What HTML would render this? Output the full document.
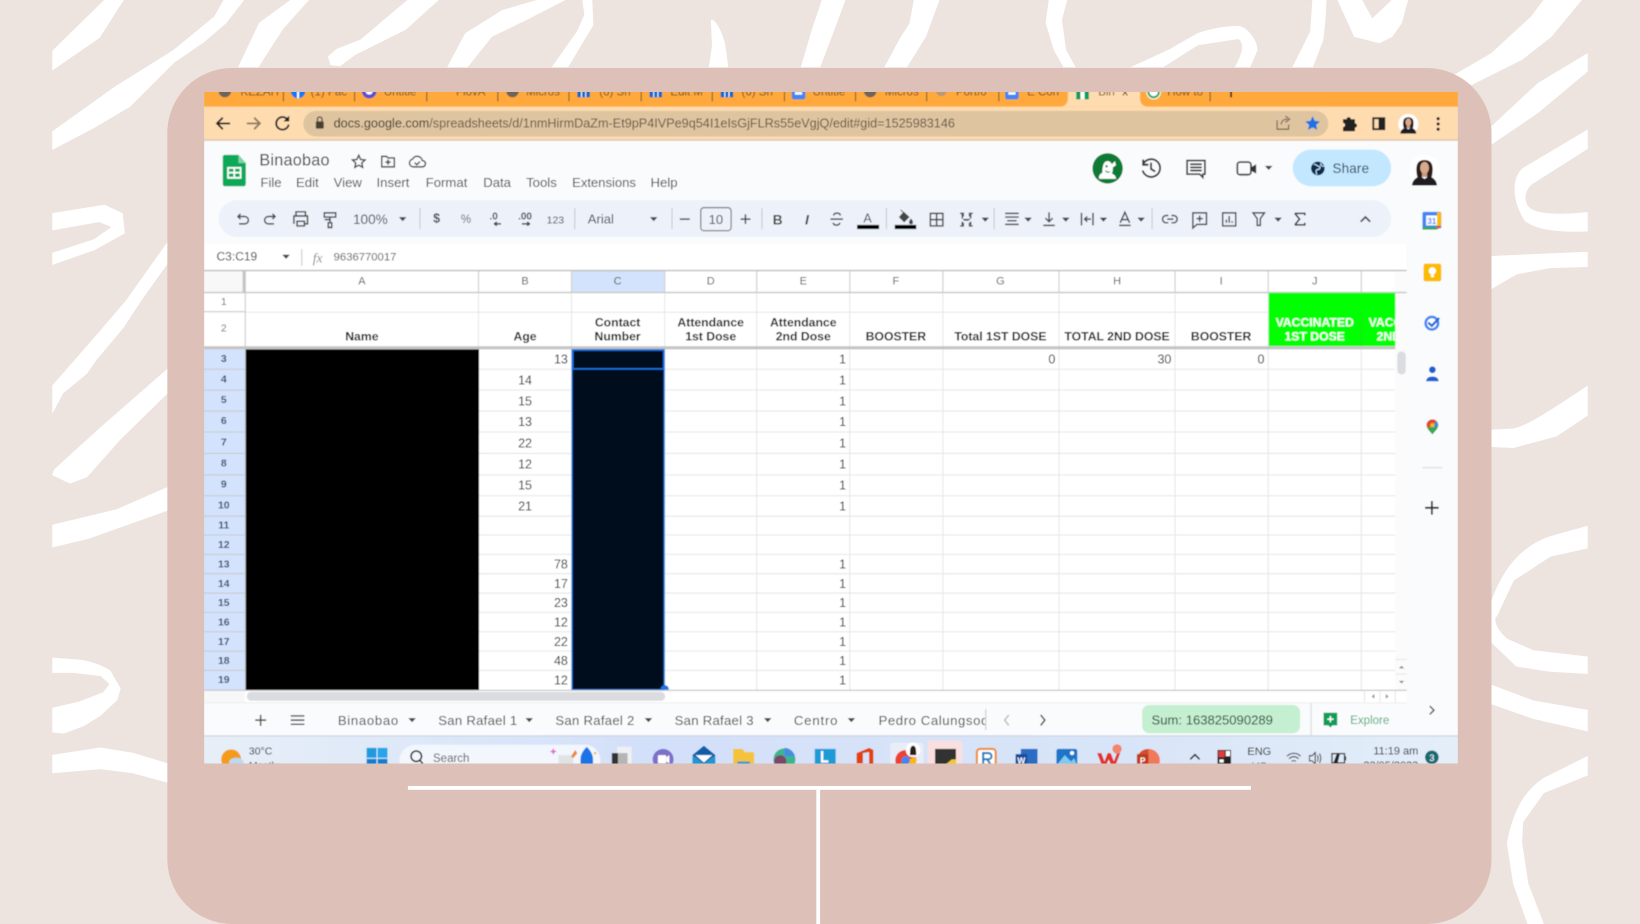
<!DOCTYPE html>
<html lang="en">
<head>
<meta charset="utf-8">
<title>Binaobao</title>
<style>
html,body{margin:0;padding:0;width:1640px;height:924px;overflow:hidden;background:#ede3df}
svg{display:block;position:absolute;left:0;top:0}
text{font-family:"Liberation Sans",Arial,sans-serif;fill:#3c4043}
.tab{font-size:11px;fill:#6b5232}
.menu{font-size:12.6px;fill:#444746}
.cl{font-size:10.5px;fill:#555;text-anchor:middle}
.rn{font-size:10px;font-weight:bold;fill:#3c4a63;text-anchor:middle}
.rn0{font-size:10px;fill:#666;text-anchor:middle}
.h{font-size:11.7px;font-weight:bold;fill:#111;text-anchor:middle}
.hw{font-size:11.7px;font-weight:bold;fill:#fff;text-anchor:middle}
.n{font-size:12px;fill:#222;text-anchor:end}
.nc{font-size:12px;fill:#222;text-anchor:middle}
.st{font-size:12.6px;fill:#444746;letter-spacing:.25px}
.tb{font-size:12px;fill:#444746}
.ic{fill:none;stroke:#444746;stroke-width:1.4}
.sep{stroke:#c7c7c7;stroke-width:1}
.ks{font-size:10.5px;fill:#222}
</style>
</head>
<body>
<svg width="1640" height="924" viewBox="0 0 1568 883.4" xmlns="http://www.w3.org/2000/svg">
<defs>
<clipPath id="cb"><rect x="50" y="0" width="1468" height="883.4"/></clipPath>
<clipPath id="cs"><rect x="195" y="88" width="1199" height="642"/></clipPath>
<clipPath id="cg"><rect x="1213" y="280" width="121" height="52"/></clipPath>
<clipPath id="cp"><rect x="838" y="675" width="104" height="28"/></clipPath>
<path id="c" d="M-3.6-1.9h7.2L0 2z"/>
<filter id="soft" x="0" y="0" width="100%" height="100%"><feGaussianBlur stdDeviation="0.42"/></filter>
<linearGradient id="tbg" x1="0" x2="1" y1="0" y2="0"><stop offset="0" stop-color="#e7eff8"/><stop offset=".35" stop-color="#d3e0f9"/><stop offset=".75" stop-color="#d9e5f8"/><stop offset="1" stop-color="#e4eef9"/></linearGradient>
<g id="person"><circle cx="0" cy="0" r="12" fill="#fff"/><path d="M-5.500 5c-1-4-1-8 0-10 1.500-4 9.500-4 11 0 1 2 1 6 0 10z" fill="#2b1b17"/><ellipse cx="0" cy="-2" rx="3.400" ry="4.600" fill="#d8a98d"/><path d="M-2 2h4v3h-4z" fill="#c99a80"/><path d="M-9.500 11.500c0-5 5-7 6.500-7l3 2 3-2c1.500 0 6.500 2 6.500 7z" fill="#1d1b20"/></g>
</defs>

<rect width="1568" height="883.4" fill="#ede3df"/>
<g clip-path="url(#cb)" fill="#fff" stroke="#fff" stroke-width="0.6" stroke-linejoin="round">
<path d="M100 0H118L95 36 50 67V49Z"/>
<path d="M214 0H233L216 22 195 40 166 60 124 102 90 122 50 143V126L110 83 166 48 205 16Z"/>
<path d="M278 0H295L270 28 247 64H228L248 22Z"/>
<path d="M390 0H419L388 28 340 52 325 63 316 62 314 54 322 47 345 38 372 15Z"/>
<path d="M514 0H540L505 18 470 35 447 64H428L445 32 480 10Z"/>
<path d="M557 0H566L567 24 543 64H528L552 30 559 14Z"/>
<path d="M680 19C684 19 690 30 693 42L696 64H678L681 44Z"/>
<path d="M786 0H808L795 35 784 64H766L776 30Z"/>
<path d="M874 0H898L885 35 867 64H846L860 38 870 22Z"/>
<path d="M1003 0H1020L1015 19 1019 48 1028 64H1017L1008 48 1000 22Z"/>
<path d="M1082 64L1117 48 1145 32C1160 27 1172 25 1184 25 1192 26 1202 38 1202 48L1195 64H1181C1186 55 1192 42 1184 37L1145 43 1112 64Z"/>
<path d="M1255 0H1268L1267 19 1265 38 1255 64H1236L1253 30Z"/>
<path d="M1279 0L1295 35 1319 41 1331 35 1340 22 1346 0H1331L1312 18 1302 0Z"/>
<path d="M1476 0H1512L1483 35 1455 57 1407 81 1390 72 1426 51 1464 16Z"/>
<path d="M1518 51L1470 80 1426 121V138L1470 108 1518 68Z"/>
<path d="M1518 124L1456 161C1446 170 1445 190 1458 211 1470 220 1490 222 1518 221V203C1490 206 1472 205 1464 200 1456 195 1456 182 1466 175L1518 142Z"/>
<path d="M1426 245L1518 241V255L1482 256 1450 262 1426 276Z"/>
<path d="M1426 411L1447 410C1460 407 1476 397 1518 369V397L1488 417 1447 428 1426 427Z"/>
<path d="M1518 503L1482 513C1462 520 1440 535 1426 575V614L1450 637 1482 642 1518 644V628L1466 622 1441 611C1428 600 1428 590 1431 589L1447 555 1482 532 1518 524Z"/>
<path d="M1426 655L1466 670 1518 679V699L1466 687 1426 673Z"/>
<path d="M1518 723L1476 744C1460 755 1448 770 1441 806L1447 845 1461 884H1476L1461 845 1455 806 1456 786 1476 758 1518 741Z"/>
<path d="M160 232L121 287 92 321 50 369V395L60 376 83 357 92 344 118 313 135 287 160 252Z"/>
<path d="M50 204L100 196 117 204 119 223 90 239 50 253V242L90 229 107 217 95 212 50 220Z"/>
<path d="M160 353L96 409 52 449 50 454 67 462 83 456 115 420 160 376Z"/>
<path d="M160 466L112 487 50 502V523L84 515 160 488Z"/>
<path d="M50 629L76 631C90 633 98 637 105 641L115 658 112 669 96 684 80 694 61 701 50 700V677L76 671 99 662 105 654 96 646 70 643 50 643Z"/>
<path d="M50 722L96 715 127 720 160 730V748L127 739 96 735 50 739Z"/>
</g>

<rect x="160" y="65" width="1266" height="818.4" rx="62" ry="62" fill="#ddc0b7"/>
<rect x="390" y="751.500" width="806" height="3.600" fill="#fff"/>
<rect x="780.500" y="755" width="3.600" height="128.400" fill="#fff"/>

<g clip-path="url(#cs)" filter="url(#soft)">
<rect x="195" y="88" width="1199" height="642" fill="#f9fbfd"/>
<!-- tab strip -->
<rect x="195" y="80" width="1199" height="23" fill="#ffa93e"/>
<path d="M1013 102c5 0 8-3 8-8V80H1090V94c0 5 3 8 8 8z" fill="#ffdcb0"/>
<g stroke="#7a5a30" stroke-width="1"><path d="M271 82V97M339 82V97M408 82V97M476 82V97M544 82V97M613 82V97M681 82V97M750 82V97M818 82V97M886 82V97M955 82V97M1157 82V97"/></g>
<circle cx="215" cy="87" r="6" fill="#6d655a"/><circle cx="285" cy="87" r="7" fill="#1877f2"/><path d="M285 84v10" stroke="#fff" stroke-width="2"/><circle cx="353" cy="87" r="7" fill="#5b4ed1"/><circle cx="353" cy="87" r="3.500" fill="#fff"/>
<path d="M416 86l5-3 5 3-5 3z" fill="#f5b400"/><circle cx="490" cy="87" r="6" fill="#6d655a"/>
<g fill="#1967c8"><rect x="552" y="83" width="12" height="10"/><rect x="621" y="83" width="12" height="10"/><rect x="689" y="83" width="12" height="10"/></g>
<g stroke="#fff" stroke-width="1"><path d="M556 84v9M560 84v9M625 84v9M629 84v9M693 84v9M697 84v9"/></g>
<rect x="757" y="82" width="13" height="13" rx="2" fill="#4285f4"/><rect x="760" y="88" width="7" height="2.500" fill="#fff"/>
<circle cx="832" cy="87" r="6" fill="#6d655a"/><circle cx="900" cy="87" r="5" fill="#b89a78"/>
<rect x="961" y="82" width="13" height="13" rx="2" fill="#4285f4"/><rect x="964" y="88" width="7" height="2.500" fill="#fff"/>
<rect x="1029" y="84" width="12" height="11" fill="#0f9d58"/><rect x="1033" y="87" width="4" height="8" fill="#fff"/>
<circle cx="1103" cy="88" r="7" fill="#fff"/><circle cx="1103" cy="88" r="5" fill="none" stroke="#34a853" stroke-width="2"/>
<text class="tab" x="230" y="91.500">KEZAH</text><text class="tab" x="297" y="91.500">(1) Fac</text><text class="tab" x="367" y="91.500">Untitle</text><text class="tab" x="436" y="91.500">FiovA</text><text class="tab" x="503" y="91.500">Micros</text><text class="tab" x="573" y="91.500">(6) Sh</text><text class="tab" x="641" y="91.500">Edit M</text><text class="tab" x="709" y="91.500">(6) Sh</text><text class="tab" x="777" y="91.500">Untitle</text><text class="tab" x="846" y="91.500">Micros</text><text class="tab" x="914" y="91.500">Portfo</text><text class="tab" x="982" y="91.500">E Con</text><text class="tab" x="1050" y="91.500">Bin</text><text class="tab" x="1073" y="91.500" style="fill:#222">x</text><text class="tab" x="1116" y="91.500">How to</text>
<path d="M1177 84v9" stroke="#222" stroke-width="1.600"/>

<!-- url row -->
<rect x="195" y="102" width="1199" height="32" fill="#ffdcb0"/>
<rect x="195" y="133" width="1199" height="1.600" fill="#e2c9ab"/>
<rect x="290" y="106" width="980" height="24.500" rx="12.200" fill="#dfc4a0"/>
<g fill="none" stroke="#222" stroke-width="1.800"><path d="M220 118H208M213 112.500L207.500 118 213 123.500"/></g>
<g fill="none" stroke="#8f7a60" stroke-width="1.800"><path d="M236 118H248M243 112.500L248.500 118 243 123.500"/></g>
<path d="M275 114.500A6 6 0 1 0 276 119" fill="none" stroke="#222" stroke-width="1.800"/><path d="M276.500 110.500v5.500h-5.500z" fill="#222"/>
<rect x="302" y="116" width="7.500" height="7" rx="1" fill="#4a4033"/><path d="M303.500 116v-2a2.200 2.200 0 0 1 4.400 0v2" fill="none" stroke="#4a4033" stroke-width="1.200"/>
<text x="319" y="122" font-size="12.600" textLength="594" lengthAdjust="spacingAndGlyphs" style="fill:#5e5445"><tspan style="fill:#2d2a25">docs.google.com</tspan>/spreadsheets/d/1nmHirmDaZm-Et9pP4IVPe9q54I1eIsGjFLRs55eVgjQ/edit#gid=1525983146</text>
<path d="M1221 115v8.500h11V119M1225 119c0-3 2-5 6-5M1229 111l4 3-4 3" fill="none" stroke="#7c6d58" stroke-width="1.200"/>
<path d="M1255 111l2.100 4.600 5 .5-3.700 3.300 1 4.900-4.400-2.500-4.400 2.500 1-4.900-3.700-3.300 5-.5z" fill="#1a73e8"/>
<path d="M1284 114h3.500a2 2 0 0 1 4 0h4v4a2 2 0 0 1 0 4v3.500h-11.500v-4a2 2 0 0 0 0-4z" fill="#222"/>
<rect x="1313" y="113" width="10.500" height="10.500" fill="none" stroke="#222" stroke-width="1.800"/><rect x="1318" y="113" width="5.500" height="10.500" fill="#222"/>
<g transform="translate(1346.500 118.500) scale(.8)"><use href="#person"/></g>
<g fill="#222"><circle cx="1375" cy="113.500" r="1.500"/><circle cx="1375" cy="118.500" r="1.500"/><circle cx="1375" cy="123.500" r="1.500"/></g>

<!-- docs header -->
<path d="M215 148h13l7 8v20a2 2 0 0 1-2 2h-18a2 2 0 0 1-2-2v-26a2 2 0 0 1 2-2z" fill="#0fa958"/>
<path d="M228 148l7 8h-7z" fill="#7fd4a5"/>
<path d="M218 160.500h12v9.500h-12z M224 160.500v9.500M218 165h12" fill="none" stroke="#fff" stroke-width="1.700"/>
<text x="248" y="158" font-size="15.500" style="fill:#3c4043" textLength="67">Binaobao</text>
<path d="M343 148.500l1.800 3.900 4.200.5-3.100 2.900.8 4.200-3.700-2.100-3.700 2.100.8-4.200-3.100-2.900 4.200-.5z" class="ic" stroke-width="1.300"/>
<path d="M365 149.500h4.500l1.500 1.500h6v8.500h-12zM371 152.500v5M368.500 155h5" class="ic" stroke-width="1.200"/>
<path d="M395 159.500a3.700 3.700 0 0 1-.6-7.300 5 5 0 0 1 9.400 1.300 3 3 0 0 1 0 6zM396.500 155.500l2 2 3-3" class="ic" stroke-width="1.200"/>
<text class="menu" x="249" y="179">File</text><text class="menu" x="283" y="179">Edit</text><text class="menu" x="319" y="179">View</text><text class="menu" x="360" y="179">Insert</text><text class="menu" x="407" y="179">Format</text><text class="menu" x="462" y="179">Data</text><text class="menu" x="503" y="179">Tools</text><text class="menu" x="547" y="179" textLength="61">Extensions</text><text class="menu" x="622" y="179">Help</text>

<circle cx="1059" cy="161" r="14.500" fill="#0f7a35"/><path d="M1051 171c-1-3 1-5 3-6 0-6 1-11 5-11 2 0 3 1 4 3l3-3 1 4-3 2c0 2 0 4-1 6 3 1 4 3 4 5z" fill="#fff"/><circle cx="1058" cy="159" r="1.100" fill="#0f7a35"/><path d="M1057 163c1 2 3 2 4 1" stroke="#0f7a35" fill="none"/>
<path d="M1093 157a8.500 8.500 0 1 1-.5 6M1093 152.500v5h5M1100.500 155.500v6l4 2.500" fill="none" stroke="#333" stroke-width="1.800"/>
<path d="M1135 153.500h17v13h-2v3l-3-3h-12zM1138 157h11M1138 160h11M1138 163h11" fill="none" stroke="#333" stroke-width="1.600"/>
<rect x="1183" y="155" width="13" height="12" rx="2.500" fill="none" stroke="#444" stroke-width="1.700"/><path d="M1196 160l5-3v9l-5-3z" fill="#333"/>
<use href="#c" x="1213" y="160.500" fill="#444"/>
<rect x="1236" y="143" width="94" height="35" rx="17.500" fill="#c2e7ff"/>
<circle cx="1260" cy="161" r="6.500" fill="#0b2a4a"/><path d="M1256 157c3 0 3 2 5 2s1 3-1 3-2 2-1 5M1263 156c-1 2 1 3 3 3" fill="none" stroke="#c2e7ff" stroke-width="1.100"/>
<text x="1274" y="165.500" font-size="12.800" style="fill:#1f3a4d" letter-spacing=".2">Share</text>
<g transform="translate(1362 163) scale(1.250)"><use href="#person"/></g>

<!-- toolbar -->
<rect x="209" y="191.500" width="1121" height="35" rx="17.500" fill="#edf2fa"/>
<g class="ic">
<path d="M228 207h6a3.300 3.300 0 0 1 0 7h-5.500M230 204.500l-2.500 2.500 2.500 2.500" />
<path d="M262.500 207h-6a3.300 3.300 0 0 0 0 7h5.500M260.500 204.500l2.500 2.500-2.500 2.500"/>
<path d="M283 206v-3.500h9v3.500M281 214v-7.500h13v7.500h-3M284 211.500h7v4.500h-7z"/>
<path d="M310 203.500h11v4h-11zM315.500 207.500v2.500h-5M315.500 210v3M313.800 213h3.400v4.500h-3.400z" />
<path d="M650 209.500h9.500M708 209.500h9.500M712.700 205v9"/>
<path d="M794 209.500h12M797 206c.5-3 6-3 6.500 0M803 213c-.5 3-6 3-6.500 0"/>
<path d="M889.500 204h12v12h-12zM895.500 204v12M889.500 210h12"/>
<path d="M918 204h3v3M918 216h3v-3M930 204h-3v3M930 216h-3v-3M920 205v4M928 205v4M920 212v3M928 212v3M921 209.500l2 1 1-1M927 209.500l-2 1-1-1"/>
<path d="M961 204h13M961 207.500h13M963 211h9M961 214.500h13"/>
<path d="M1003 203v9M999.500 208.500l3.500 3.500 3.500-3.500M997.500 215.500h11"/>
<path d="M1034 203.500v12M1045 203.500v12M1043 209.500h-6M1039.500 207l-2.500 2.500 2.500 2.500"/>
<path d="M1071 213l4.500-10 4.500 10M1072.500 210h6M1070 215.500h11"/>
<path d="M1117 206h-2a3.500 3.500 0 0 0 0 7h2M1120 206h2a3.500 3.500 0 0 1 0 7h-2M1116 209.500h6"/>
<path d="M1140.500 203.500h13v11h-9l-4 3.500zM1147 206v6M1144 209h6"/>
<path d="M1169 203.500h12.500v12.500h-12.500zM1172.500 213v-3M1175.200 213v-6.500M1178 213v-1.500"/>
<path d="M1198 203.500h11l-4 5.500v6.500h-3v-6.500z"/>
<path d="M1301 212l4.500-4.500 4.500 4.500" stroke-width="1.700"/>
</g>
<path d="M1238 204h9.500v2M1238 215h9.500v-2M1238 204l4.500 5.500-4.500 5.500" fill="none" stroke="#333" stroke-width="1.500"/>
<text class="tb" x="337.500" y="214" style="font-size:13px">100%</text>
<text class="tb" x="417.500" y="212.500" text-anchor="middle" style="font-size:12px;font-weight:bold">$</text>
<text class="tb" x="445.500" y="213" text-anchor="middle" style="font-size:11px;fill:#5f6368">%</text>
<text class="tb" x="472" y="210" text-anchor="middle" style="font-size:9.500px;font-weight:bold">.0</text><path d="M479 214h-6M475 212.200l-2.200 1.800 2.200 1.800" class="ic" stroke-width="1.100"/>
<text class="tb" x="502" y="210" text-anchor="middle" style="font-size:9.500px;font-weight:bold">.00</text><path d="M499 214h7M504 212.200l2.200 1.800-2.200 1.800" class="ic" stroke-width="1.100"/>
<text class="tb" x="531" y="213.500" text-anchor="middle" style="font-size:10px">123</text>
<text class="tb" x="562" y="213.500" style="font-size:12.500px">Arial</text>
<rect x="670" y="198.500" width="29" height="22" rx="3" fill="none" stroke="#747775" stroke-width="1.100"/>
<text class="tb" x="684.500" y="214" text-anchor="middle" style="font-size:12.500px">10</text>
<text x="743.500" y="214.500" text-anchor="middle" style="font-size:13px;font-weight:bold;fill:#444746">B</text>
<text x="771.500" y="214.500" text-anchor="middle" style="font-size:13.500px;font-weight:bold;font-style:italic;fill:#444746">I</text>
<text x="829.500" y="212.500" text-anchor="middle" style="font-size:12px;fill:#444746">A</text><rect x="819.500" y="215" width="21" height="4" fill="#000"/>
<path d="M861 200.500l2.500 2.500M864 203l5 4.500-4.500 4.500-4.500-4.500zM871 209.500c1 1.500 1.500 2 1.500 3a1.500 1.500 0 0 1-3 0c0-1 .5-1.500 1.500-3z" fill="#444746" stroke="#444746" stroke-width=".8"/><rect x="855.500" y="215" width="20.500" height="4" fill="#000"/>
<g fill="#444746"><use href="#c" x="385" y="209.500"/><use href="#c" x="625" y="209.500"/><use href="#c" x="942" y="210"/><use href="#c" x="983" y="210"/><use href="#c" x="1019" y="210"/><use href="#c" x="1055" y="210"/><use href="#c" x="1091" y="210"/><use href="#c" x="1222" y="210"/></g>
<g class="sep"><path d="M401.500 199v20M549.500 199v20M642.500 199v20M728.500 199v20M847.500 199v20M950.500 199v20M1101.500 199v20"/></g>

<!-- formula bar -->
<rect x="195" y="233" width="1150" height="25" fill="#fff"/>
<text x="207" y="249" style="font-size:11.500px;fill:#333">C3:C19</text><use href="#c" x="273.500" y="245.500" fill="#444"/>
<path d="M288.500 238v16" stroke="#c7c7c7"/>
<text x="299" y="251" style="font-size:13px;font-style:italic;font-family:'Liberation Serif',serif;fill:#888">fx</text>
<text x="319" y="249" style="font-size:10.800px;fill:#555">9636770017</text>

<!-- grid -->
<rect x="195" y="258" width="1150" height="402" fill="#fff"/>
<rect x="195" y="259" width="39" height="20" fill="#f8f8f8"/>
<rect x="547" y="259" width="88" height="20" fill="#d3e3fd"/>
<rect x="195" y="334" width="40" height="326" fill="#d3e3fd"/>
<rect x="1334" y="259" width="11" height="401" fill="#fbfbfb"/>
<rect x="195" y="258" width="1150" height="1.300" fill="#bdbdbd"/>
<rect x="195" y="279" width="1150" height="1.300" fill="#c4c4c4"/>
<rect x="232" y="259" width="3" height="21" fill="#c4c4c4"/>
<g stroke="#e6e6e6" stroke-width="1">
<path d="M235 298.500H1334M458 353H1334M458 373H1334M458 393H1334M458 413H1334M458 433.500H1334M458 454H1334M458 474H1334M458 493.500H1334M458 511.500H1334M458 530H1334M458 548.500H1334M458 567H1334M458 585.500H1334M458 604H1334M458 622.500H1334M458 641H1334"/>
<path d="M546.500 280V660M635.500 280V660M723.500 280V660M812.500 280V660M901.500 280V660M1012.500 280V660M1123.500 280V660M1212.500 280V660M1301.500 280V660M457.500 280V334"/>
</g>
<g stroke="#c9c9c9" stroke-width="1"><path d="M457.500 259V280M546.500 259V280M635.500 259V280M723.500 259V280M812.500 259V280M901.500 259V280M1012.500 259V280M1123.500 259V280M1212.500 259V280M1301.500 259V280M234.500 280V660"/>
<path d="M195 298H234M195 353H234M195 373H234M195 393H234M195 413H234M195 433.500H234M195 454H234M195 474H234M195 493.500H234M195 511.500H234M195 530H234M195 548.500H234M195 567H234M195 585.500H234M195 604H234M195 622.500H234M195 641H234"/></g>
<rect x="1213" y="280" width="121" height="51" fill="#00ff00"/>
<path d="M1301.500 298V331" stroke="#12e812"/>
<rect x="195" y="331" width="1139" height="3" fill="#c4c4c4"/>
<rect x="235" y="334" width="223" height="326" fill="#000"/>
<rect x="547" y="334" width="88" height="326" fill="#000a1a"/>
<rect x="547.700" y="334.700" width="86.800" height="18" fill="none" stroke="#1a73e8" stroke-width="1.500"/>
<rect x="547" y="334.500" width="88" height="325" fill="none" stroke="#1a73e8" stroke-width="1.300"/>
<rect x="195" y="659.500" width="1150" height="1.200" fill="#bdbdbd"/>

<text class="cl" x="346" y="272">A</text><text class="cl" x="502" y="272">B</text><text class="cl" x="590.500" y="272">C</text><text class="cl" x="679.500" y="272">D</text><text class="cl" x="768" y="272">E</text><text class="cl" x="856.500" y="272">F</text><text class="cl" x="956.500" y="272">G</text><text class="cl" x="1068" y="272">H</text><text class="cl" x="1167.500" y="272">I</text><text class="cl" x="1257" y="272">J</text>
<text class="rn0" x="214" y="291.500">1</text><text class="rn0" x="214" y="317">2</text>
<text class="rn" x="214" y="346">3</text><text class="rn" x="214" y="365.500">4</text><text class="rn" x="214" y="385.500">5</text><text class="rn" x="214" y="405.500">6</text><text class="rn" x="214" y="426">7</text><text class="rn" x="214" y="446">8</text><text class="rn" x="214" y="466">9</text><text class="rn" x="214" y="486">10</text><text class="rn" x="214" y="505.500">11</text><text class="rn" x="214" y="524">12</text><text class="rn" x="214" y="542.500">13</text><text class="rn" x="214" y="561">14</text><text class="rn" x="214" y="579.500">15</text><text class="rn" x="214" y="598">16</text><text class="rn" x="214" y="616.500">17</text><text class="rn" x="214" y="635">18</text><text class="rn" x="214" y="653">19</text>

<text class="h" x="346" y="325.500">Name</text><text class="h" x="502" y="325.500">Age</text>
<text class="h" x="590.500" y="312">Contact</text><text class="h" x="590.500" y="325.500">Number</text>
<text class="h" x="679.500" y="312">Attendance</text><text class="h" x="679.500" y="325.500">1st Dose</text>
<text class="h" x="768" y="312">Attendance</text><text class="h" x="768" y="325.500">2nd Dose</text>
<text class="h" x="856.500" y="325.500">BOOSTER</text><text class="h" x="956.500" y="325.500">Total 1ST DOSE</text><text class="h" x="1068" y="325.500">TOTAL 2ND DOSE</text><text class="h" x="1167.500" y="325.500">BOOSTER</text>
<g clip-path="url(#cg)"><text class="hw" x="1257" y="312">VACCINATED</text><text class="hw" x="1257" y="325.500">1ST DOSE</text><text class="hw" x="1346" y="312">VACCINATED</text><text class="hw" x="1346" y="325.500">2ND DOSE</text></g>

<text class="n" x="543" y="347.500">13</text>
<text class="nc" x="502" y="367.500">14</text><text class="nc" x="502" y="387.500">15</text><text class="nc" x="502" y="407.500">13</text><text class="nc" x="502" y="428">22</text><text class="nc" x="502" y="448">12</text><text class="nc" x="502" y="468">15</text><text class="nc" x="502" y="488">21</text>
<text class="n" x="543" y="543.500">78</text><text class="n" x="543" y="562">17</text><text class="n" x="543" y="580.500">23</text><text class="n" x="543" y="599">12</text><text class="n" x="543" y="617.500">22</text><text class="n" x="543" y="636">48</text><text class="n" x="543" y="654.500">12</text>
<text class="n" x="809" y="347.500">1</text><text class="n" x="809" y="367.500">1</text><text class="n" x="809" y="387.500">1</text><text class="n" x="809" y="407.500">1</text><text class="n" x="809" y="428">1</text><text class="n" x="809" y="448">1</text><text class="n" x="809" y="468">1</text><text class="n" x="809" y="488">1</text><text class="n" x="809" y="543.500">1</text><text class="n" x="809" y="562">1</text><text class="n" x="809" y="580.500">1</text><text class="n" x="809" y="599">1</text><text class="n" x="809" y="617.500">1</text><text class="n" x="809" y="636">1</text><text class="n" x="809" y="654.500">1</text>
<text class="n" x="1009" y="347.500">0</text><text class="n" x="1120" y="347.500">30</text><text class="n" x="1209" y="347.500">0</text>

<!-- scrollbars -->
<rect x="1336" y="336" width="8" height="22" rx="4" fill="#dadce0"/>
<path d="M1337.500 639l2.500-2.500 2.500 2.500zM1337.500 651l2.500 2.500 2.500-2.500z" fill="#8a8a8a"/>
<path d="M1334 630.500h11M1334 644.500h11" stroke="#e6e6e6"/>
<rect x="195" y="660.500" width="1150" height="12" fill="#fff"/>
<rect x="195" y="660.500" width="39" height="12" fill="#f7f7f7"/>
<rect x="236" y="661.500" width="400" height="8.500" rx="4.200" fill="#dadce0"/>
<path d="M635.500 655a4 4 0 0 1 4 4.500h-8a4 4 0 0 1 4-4.500z" fill="#1a73e8"/>
<path d="M1314 663.500v4.500l-2.500-2.200zM1325 663.500v4.500l2.500-2.200z" fill="#8a8a8a"/>
<path d="M1304.500 660.500v12M1319.500 660.500v12M1334 660.500v12" stroke="#e6e6e6"/>

<!-- sheet tabs -->
<rect x="195" y="672" width="1150" height="32" fill="#f9fbfd"/>
<rect x="195" y="671.500" width="1150" height="1" fill="#eceef1"/>
<path d="M244 688.500h10.500M249.200 683.500v10.500M278 684.500h13M278 688.500h13M278 692.500h13" class="ic" stroke-width="1.300"/>
<text class="st" x="323" y="693" textLength="58">Binaobao</text><text class="st" x="419" y="693">San Rafael 1</text><text class="st" x="531" y="693">San Rafael 2</text><text class="st" x="645" y="693">San Rafael 3</text><text class="st" x="759" y="693" textLength="42">Centro</text>
<g clip-path="url(#cp)"><text class="st" x="840" y="693" style="letter-spacing:.55px">Pedro Calungsod</text></g>
<g fill="#444746"><use href="#c" x="394" y="688.500"/><use href="#c" x="506" y="688.500"/><use href="#c" x="620" y="688.500"/><use href="#c" x="734" y="688.500"/><use href="#c" x="814" y="688.500"/><use href="#c" x="1228" y="688"/></g>
<path d="M942.500 678v20" stroke="#c7c7c7"/>
<path d="M964.500 683.500l-4 5 4 5" fill="none" stroke="#bbb" stroke-width="1.400"/><path d="M995 683.500l4 5-4 5" fill="none" stroke="#444" stroke-width="1.400"/>
<rect x="1092" y="674" width="151" height="27" rx="7" fill="#c4efd0"/>
<text x="1101" y="692.500" style="font-size:12.500px;fill:#1f3327" textLength="116">Sum: 163825090289</text>
<path d="M1253.500 672v32" stroke="#d4d6d8"/>
<path d="M1265.500 681.500h13v12h-4.500l-2 2-2-2h-4.500z" fill="#0f9d58"/><path d="M1272 684.500v6M1269 687.500h6" stroke="#fff" stroke-width="1.400"/>
<text x="1291" y="692" style="font-size:11px;fill:#47a86d">Explore</text>

<!-- right panel -->
<rect x="1345" y="233" width="49" height="471" fill="#f9fbfd"/>
<rect x="1360" y="202.500" width="18" height="16" rx="1.500" fill="#4285f4"/><rect x="1363.500" y="206" width="11" height="9.500" fill="#fff"/><text x="1369" y="214" text-anchor="middle" style="font-size:7.500px;fill:#4285f4;font-weight:bold">31</text>
<rect x="1360" y="217" width="14" height="2.500" fill="#34a853"/><rect x="1374" y="203" width="4" height="13" fill="#fbbc04"/><path d="M1374 216h4l-4 3.500z" fill="#ea4335"/>
<rect x="1361" y="252" width="17" height="17" rx="2" fill="#fbbc04"/><circle cx="1369.500" cy="259" r="3.500" fill="#fff"/><rect x="1368" y="262.500" width="3" height="2.500" fill="#fff"/>
<circle cx="1369" cy="309" r="6" fill="none" stroke="#4285f4" stroke-width="2.400"/><path d="M1365.500 308.500l3.500 3 7-7.500" fill="none" stroke="#1967d2" stroke-width="2.200"/>
<circle cx="1369.500" cy="353.500" r="3.200" fill="#1a5fd0"/><path d="M1363.500 364.500c0-6 12-6 12 0z" fill="#1a5fd0"/>
<path d="M1369.500 401a5.600 5.600 0 0 1 5.600 5.600c0 3.400-3.600 6-5.600 8.900-2-2.900-5.600-5.500-5.600-8.900a5.600 5.600 0 0 1 5.600-5.600z" fill="#34a853"/><path d="M1364 405.500a5.600 5.600 0 0 1 5.500-4.500 5.600 5.600 0 0 1 4 1.700l-8.500 7z" fill="#ea4335"/><path d="M1373.500 402.700a5.600 5.600 0 0 1 1.600 3.900l-5.600 3z" fill="#4285f4"/><circle cx="1369.500" cy="406.500" r="2" fill="#fbbc04"/>
<path d="M1360 447h19" stroke="#dcdcdc"/>
<path d="M1362.500 485.500h13M1369 479v13" stroke="#222" stroke-width="1.700"/>
<path d="M1367 675l4 4-4 4" fill="none" stroke="#555" stroke-width="1.400"/>

<!-- taskbar -->
<rect x="195" y="703.500" width="1199" height="27" fill="url(#tbg)"/>
<rect x="195" y="703" width="1199" height="1.200" fill="#cdd5df"/>
<circle cx="221" cy="726" r="9.500" fill="#f59b1f"/><ellipse cx="226" cy="729" rx="7" ry="4.500" fill="#bcd9f2"/>
<text x="238" y="721.500" style="font-size:10px;fill:#222">30°C</text><text x="238" y="735" style="font-size:10px;fill:#333">Mostly</text>
<rect x="350.500" y="715" width="9.500" height="9.500" fill="#1d9be0"/><rect x="361" y="715" width="9.500" height="9.500" fill="#27a5e8"/><rect x="350.500" y="725.500" width="9.500" height="9.500" fill="#1180d0"/><rect x="361" y="725.500" width="9.500" height="9.500" fill="#1180d0"/>
<rect x="382" y="712" width="192" height="30" rx="15" fill="#f2f7fe"/>
<circle cx="398" cy="723" r="5" fill="none" stroke="#222" stroke-width="1.500"/><path d="M401.500 727l3 3.500" stroke="#222" stroke-width="1.500"/>
<text x="414" y="728.500" style="font-size:11px;fill:#555">Search</text>
<path d="M529 715l1 2.500 2.500 1-2.500 1-1 2.500-1-2.500-2.500-1 2.500-1z" fill="#e26ad8"/>
<rect x="534" y="722" width="14" height="10" fill="#dfe3e6"/><path d="M546 723l4-6 2 3-4 5z" fill="#ea8a3c"/>
<path d="M561 714c4 4 6 8 6 12v5h-12v-5c0-4 2-8 6-12z" fill="#1a73e8"/><circle cx="569" cy="720" r="1.200" fill="#f2b52c"/>
<rect x="590" y="714" width="14" height="18" fill="#eef0f2"/><rect x="585" y="720" width="6" height="12" fill="#333"/><rect x="591" y="720" width="9" height="12" fill="#b5b5b5"/>
<circle cx="634" cy="726" r="10" fill="#7b6fc9"/><rect x="629" y="722" width="8" height="8" rx="1" fill="#fff"/><path d="M637 724l3-2v8l-3-2z" fill="#fff"/>
<path d="M662 722l11-9 11 9v10h-22z" fill="#2495d3"/><path d="M662 722l11-9 11 9-11 8z" fill="#0f5fa8"/><path d="M665 722h16l-8 7z" fill="#fff"/>
<path d="M701 716h9l2 3h9v13h-20z" fill="#f5c33b"/><rect x="705" y="728" width="12" height="4" fill="#3a96d8"/>
<circle cx="750" cy="726" r="10.500" fill="#39b78f"/><path d="M750 715a10.500 10.500 0 0 1 10 8h-10z" fill="#4a8be0"/><circle cx="746" cy="728" r="6" fill="#7a4a6a"/>
<rect x="779" y="716" width="20" height="16" fill="#1d9bd6"/><path d="M786 718v10h6" fill="none" stroke="#fff" stroke-width="2.300"/>
<path d="M819 720l12-5 4 2v14h-4v-12l-6 1v10h-6z" fill="#e2410e"/>
<rect x="851" y="710" width="32" height="22" rx="3" fill="#e8edf8"/><circle cx="866" cy="727" r="10" fill="#ea4335"/><path d="M866 727l9-3a10 10 0 0 1-6 13z" fill="#fbbc04"/><path d="M866 727l3 10a10 10 0 0 1-12-5z" fill="#34a853"/><circle cx="866" cy="727" r="4" fill="#4285f4"/><circle cx="873" cy="717" r="7" fill="#fff"/><path d="M870 722c0-4 0-9 3-9s3 5 3 9z" fill="#2b1b17"/>
<rect x="887" y="708" width="33" height="24" rx="3" fill="#fadfe0"/><rect x="894" y="716" width="20" height="15" fill="#333"/><path d="M904 731l6-5h4v5z" fill="#f3c928"/>
<rect x="934" y="716" width="18" height="18" rx="3" fill="#fff" stroke="#f08a2c" stroke-width="2"/><path d="M940 731v-11h5a3 3 0 0 1 0 6h-5M944 726l3 5" fill="none" stroke="#1d7fc2" stroke-width="2"/>
<rect x="976" y="716" width="16" height="16" fill="#2a6cc4"/><rect x="971" y="721" width="11" height="11" fill="#174e9a"/><text x="976.500" y="730" text-anchor="middle" style="font-size:8px;font-weight:bold;fill:#fff">W</text>
<rect x="1010" y="716" width="20" height="16" rx="2" fill="#1f74c8"/><path d="M1010 732l8-10 6 6 3-3 3 7z" fill="#7ecaf0"/><circle cx="1025" cy="720" r="2" fill="#fff"/>
<path d="M1049 720h4l3 8 3-8h3l3 8 3-8h3l-5 13h-3l-3-7-3 7h-3z" fill="#e2312a"/><circle cx="1068" cy="716" r="4.500" fill="#f2856c"/>
<circle cx="1098" cy="727" r="11" fill="#f0795a"/><path d="M1098 727V716a11 11 0 0 0-11 11z" fill="#d2502f"/><rect x="1087" y="721" width="11" height="11" fill="#bd3d1e"/><text x="1092.500" y="730" text-anchor="middle" style="font-size:8px;font-weight:bold;fill:#fff">P</text>
<path d="M1138 726l4.500-4.500 4.500 4.500" fill="none" stroke="#222" stroke-width="1.500"/>
<rect x="1164" y="717" width="13" height="16" fill="#222"/><rect x="1165" y="718" width="6" height="6" fill="#e23a3a"/><rect x="1172" y="718" width="4" height="5" fill="#fff"/><rect x="1166" y="726" width="4" height="3" fill="#fff"/>
<text class="ks" x="1204" y="722" text-anchor="middle">ENG</text><text class="ks" x="1204" y="736" text-anchor="middle">US</text>
<path d="M1230.500 723a9 9 0 0 1 13 0M1232.500 725.500a6 6 0 0 1 9 0M1235 728a3 3 0 0 1 4 0" fill="none" stroke="#333" stroke-width="1"/>
<path d="M1252 722.500h2.500l3-3v11l-3-3h-2.500zM1259.500 722c1 1.500 1 4.500 0 6M1261.500 720.500c1.700 2.500 1.700 6.500 0 9" fill="none" stroke="#333" stroke-width="1"/>
<rect x="1273.500" y="720.500" width="12" height="9" fill="none" stroke="#222" stroke-width="1.200"/><rect x="1285.500" y="723" width="1.500" height="4" fill="#222"/><path d="M1275 729l3-8h3l-2 8z" fill="#222"/>
<text class="ks" x="1356" y="721.500" text-anchor="end">11:19 am</text><text class="ks" x="1356" y="735" text-anchor="end">23/05/2023</text>
<circle cx="1369" cy="724" r="6.500" fill="#176a72"/><text x="1369" y="727.500" text-anchor="middle" style="font-size:9px;fill:#fff">3</text>
</g>
</svg>
</body>
</html>
